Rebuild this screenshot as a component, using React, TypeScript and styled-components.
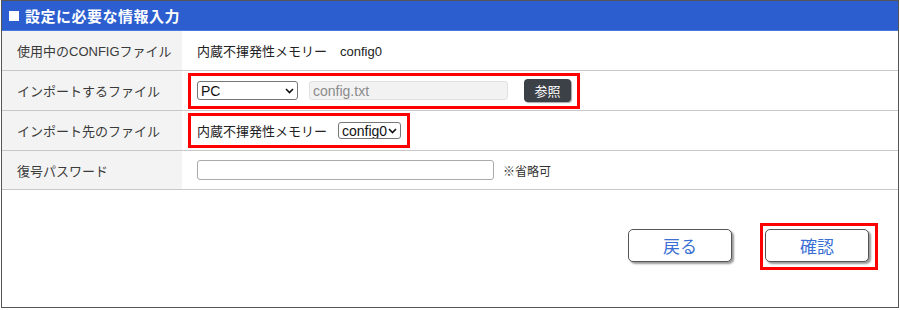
import React from "react";
import styled, { createGlobalStyle } from "styled-components";

const Global = createGlobalStyle`
  html, body { margin: 0; padding: 0; background: #fff; }
  body { font-family: "Liberation Sans", "Noto Sans CJK JP", sans-serif; color: #333; }
  * { box-sizing: border-box; }
`;

const Frame = styled.div`
  margin-left: 1px;
  width: 898px;
  height: 308px;
  border: 1px solid #555;
  display: flex;
  flex-direction: column;
`;

const Header = styled.div`
  height: 30px;
  background: #2c5ed0;
  border-bottom: 1px solid #4b78dc;
  color: #fff;
  font-weight: bold;
  font-size: 15px;
  display: flex;
  align-items: center;
  padding-left: 7px;
  gap: 6px;
  letter-spacing: 0.5px;
`;

const Square = styled.span`
  width: 10px;
  height: 10px;
  background: #fff;
  display: inline-block;
`;

const Row = styled.div<{ $h: number }>`
  display: flex;
  height: ${(p) => p.$h}px;
  border-bottom: 1px solid #c8c8c8;
`;

const Label = styled.div`
  width: 180px;
  background: #f3f3f3;
  font-size: 13px;
  color: #3a3a3a;
  display: flex;
  align-items: center;
  padding-left: 15px;
`;

const Value = styled.div<{ $pl?: number }>`
  flex: 1;
  display: flex;
  align-items: center;
  padding-left: ${(p) => p.$pl ?? 15}px;
  font-size: 13px;
  color: #222;
  gap: 10px;
`;

const Highlight = styled.div<{ $h: number }>`
  border: 3px solid #f00;
  height: ${(p) => p.$h}px;
  display: flex;
  align-items: center;
  padding: 0 6px;
`;

const SelectWrap = styled.span<{ $w: number; $h: number }>`
  position: relative;
  display: inline-flex;
  width: ${(p) => p.$w}px;
  height: ${(p) => p.$h}px;
`;

const Select = styled.select`
  appearance: none;
  -webkit-appearance: none;
  width: 100%;
  height: 100%;
  font-family: "Liberation Sans", "Noto Sans CJK JP", sans-serif;
  font-size: 14px;
  color: #111;
  border: 1px solid #767676;
  border-radius: 3px;
  background: #fff;
  padding: 0 0 0 3px;
  margin: 0;
  line-height: 1;
`;

const Chevron = styled.svg`
  position: absolute;
  right: 4px;
  top: 50%;
  width: 9px;
  height: 6px;
  margin-top: -3px;
  pointer-events: none;
`;

const FileName = styled.input`
  width: 199px;
  height: 19px;
  margin-left: 11px;
  border: 1px solid #e0e0e0;
  border-radius: 3px;
  background: #f2f2f2;
  color: #8a8a8a;
  font-family: "Liberation Sans", "Noto Sans CJK JP", sans-serif;
  font-size: 14px;
  padding: 0 3px;
`;

const DarkButton = styled.button`
  margin-left: 16px;
  width: 47px;
  height: 23px;
  border: none;
  border-radius: 4px;
  background: #3c4047;
  color: #fff;
  font-family: "Noto Sans CJK JP", sans-serif;
  font-size: 13px;
  box-shadow: 1px 1px 1px rgba(0,0,0,0.35);
  padding: 0;
`;

const Password = styled.input`
  width: 297px;
  height: 20px;
  border: 1px solid #aaa;
  border-radius: 3px;
  background: #fff;
`;

const Note = styled.span`
  font-size: 12px;
  color: #333;
  margin-left: -1px;
`;

const Inline = styled.span`
  margin-right: 11px;
`;

const Footer = styled.div`
  flex: 1;
  display: flex;
  justify-content: flex-end;
  align-items: flex-start;
  padding: 33px 20px 0 0;
  gap: 28px;
`;

const ActionButton = styled.button`
  width: 104px;
  height: 33px;
  margin-top: 6px;
  border: 1px solid #555;
  border-radius: 5px;
  background: #fff;
  color: #3b6fd4;
  font-family: "Noto Sans CJK JP", sans-serif;
  font-size: 17px;
  box-shadow: 2px 2px 2px rgba(0,0,0,0.4);
  padding: 0;
`;

const ButtonHighlight = styled.div`
  border: 3px solid #f00;
  padding: 3px 6px 5px 2px;
  display: flex;
`;

const PlainButton = styled(ActionButton)`
  margin-top: 0;
`;

function Dropdown({ w, h, value }: { w: number; h: number; value: string }) {
  return (
    <SelectWrap $w={w} $h={h}>
      <Select defaultValue={value}>
        <option>{value}</option>
      </Select>
      <Chevron viewBox="0 0 9 6">
        <path d="M1 1 L4.5 4.5 L8 1" fill="none" stroke="#111" strokeWidth="1.6" />
      </Chevron>
    </SelectWrap>
  );
}

export default function App() {
  return (
    <>
      <Global />
      <Frame>
        <Header>
          <Square />
          設定に必要な情報入力
        </Header>
        <Row $h={40}>
          <Label>使用中のCONFIGファイル</Label>
          <Value>内蔵不揮発性メモリー　config0</Value>
        </Row>
        <Row $h={40}>
          <Label>インポートするファイル</Label>
          <Value $pl={6}>
            <Highlight $h={36}>
              <Dropdown w={101} h={19} value="PC" />
              <FileName readOnly value="config.txt" />
              <DarkButton>参照</DarkButton>
            </Highlight>
          </Value>
        </Row>
        <Row $h={40}>
          <Label>インポート先のファイル</Label>
          <Value $pl={6}>
            <Highlight $h={35}>
              <Inline>内蔵不揮発性メモリー</Inline>
              <Dropdown w={63} h={17} value="config0" />
            </Highlight>
          </Value>
        </Row>
        <Row $h={39}>
          <Label>復号パスワード</Label>
          <Value>
            <Password type="password" />
            <Note>※省略可</Note>
          </Value>
        </Row>
        <Footer>
          <ActionButton>戻る</ActionButton>
          <ButtonHighlight>
            <PlainButton>確認</PlainButton>
          </ButtonHighlight>
        </Footer>
      </Frame>
    </>
  );
}
